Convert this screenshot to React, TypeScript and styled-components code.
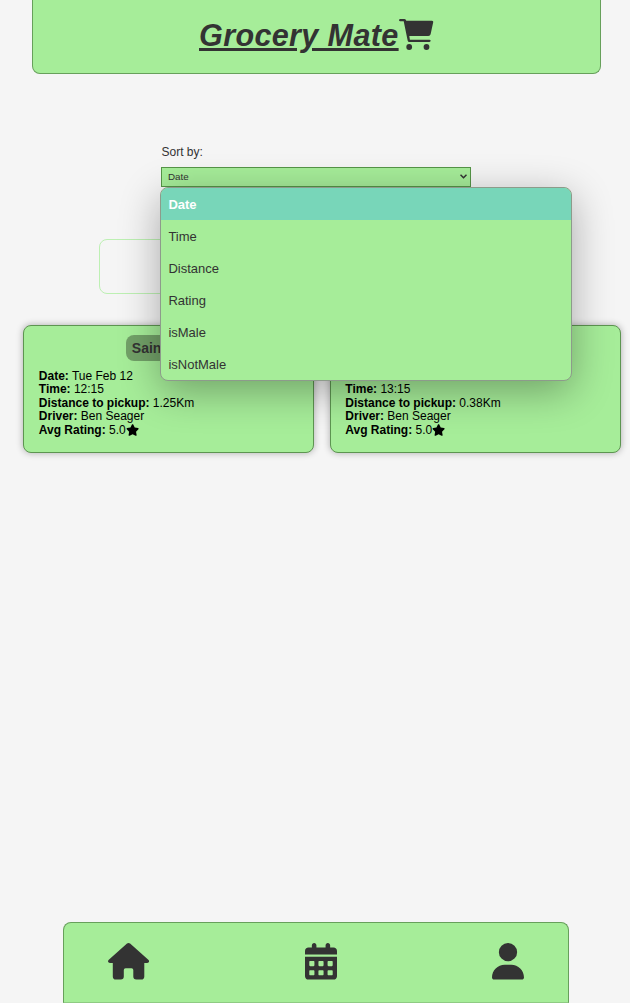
import React from "react";
import styled, { createGlobalStyle } from "styled-components";
import { FaUser, FaStar } from "react-icons/fa6";

const GlobalStyle = createGlobalStyle`
  * { box-sizing: border-box; }
  body {
    margin: 0;
    background: #f5f5f5;
    color: #333;
    font-family: "Liberation Sans", Arial, sans-serif;
    font-size: 12px;
  }
`;

const Page = styled.div`
  height: 1003px;
  display: flex;
  flex-direction: column;
  overflow: hidden;
`;

const Header = styled.header`
  height: 74px;
  width: 569px;
  margin-left: 32px;
  padding: 17px 0 0 166px;
  display: flex;
  align-items: flex-start;
  background: #a6ed99;
  border: 1px solid #67a05b;
  border-top: 0;
  border-radius: 0 0 8px 8px;
`;

const Title = styled.h1`
  margin: 0;
  font-size: 30.6px;
  line-height: 36px;
  letter-spacing: 0.34px;
  font-style: italic;
  text-decoration: underline;
  text-decoration-thickness: 3px;
  text-underline-offset: 2px;
  white-space: nowrap;
`;

const CartSvg = styled.svg`
  margin-top: 2px;
  flex: none;
`;

const SortArea = styled.section`
  position: relative;
  width: 310px;
  margin: 71px 0 0 161px;
`;

const SortLabel = styled.label`
  display: block;
  height: 22px;
  padding-left: 0.5px;
  line-height: 14px;
`;

const Select = styled.div`
  height: 20px;
  padding: 0 3px 1px 6px;
  display: flex;
  align-items: center;
  justify-content: space-between;
  background: #a6ed99;
  border: 1px solid #559547;
  font-size: 9.8px;
`;

const Menu = styled.ul`
  position: absolute;
  z-index: 2;
  top: 42px;
  left: -1px;
  width: 412px;
  height: 194px;
  margin: 0;
  padding: 0;
  list-style: none;
  overflow: hidden;
  background: #a6ed99;
  border: 1px solid #8d9b8b;
  border-radius: 8px;
  box-shadow: 0 10px 40px rgba(0, 0, 0, 0.32);
`;

const Option = styled.li<{ $active?: boolean }>`
  height: 32px;
  padding-left: 7.4px;
  line-height: 33px;
  font-size: 13px;
  color: ${(p) => (p.$active ? "#fff" : "#333")};
  background: ${(p) => (p.$active ? "#78d6b9" : "transparent")};
  font-weight: ${(p) => (p.$active ? 700 : 400)};
`;

const FilterBox = styled.div`
  width: 433px;
  height: 55px;
  margin: 52px 0 0 99px;
  border: 1px solid #bdf0b3;
  border-radius: 8px;
`;

const Cards = styled.main`
  display: flex;
  gap: 15.5px;
  margin: 31px 0 0 23px;
`;

const Card = styled.article`
  width: 291px;
  height: 128px;
  flex: none;
  padding: 9px 14.8px;
  background: #a6ed99;
  border: 1px solid #5d9551;
  border-radius: 8px;
  box-shadow: 0 0 7px rgba(0, 0, 0, 0.3);
  color: #000;
`;

const Store = styled.h2`
  width: 86px;
  height: 26px;
  margin: 0 auto 8.6px;
  padding-left: 6.3px;
  border-radius: 8px;
  background: #72a168;
  color: #333;
  font-size: 14px;
  line-height: 27px;
`;

const Detail = styled.p`
  margin: 0;
  height: 13.5px;
  line-height: 13.5px;
  white-space: nowrap;
  svg { width: 13.2px; height: 12px; vertical-align: -2px; }
`;

const BottomNav = styled.nav`
  width: 506px;
  height: 81px;
  margin: auto 0 0 63px;
  padding: 20px 43.7px 0 44.2px;
  display: flex;
  justify-content: space-between;
  background: #a6ed99;
  border: 1px solid #67a05b;
  border-radius: 8px 8px 0 0;
  border-bottom-color: #8fcb83;
`;

const UserIcon = styled(FaUser)`
  width: 32px;
  height: 36.6px;
`;

const CartIcon = () => (
  <CartSvg width="35" height="31" viewBox="0 0 35 31" fill="#333">
    <path d="M1.200 0H5.500Q6.900 0 7.300 1.700H33Q34.600 1.700 34.200 3.300L31.600 15.200Q31.200 17 29.300 17H10.300L10.900 20.700H30.500A1.150 1.150 0 0 1 30.500 23H10.300Q9 23 8.700 21.700L4.700 2.300H1.200A1.150 1.150 0 0 1 1.200 0Z" />
    <circle cx="10.200" cy="28" r="2.900" />
    <circle cx="27.500" cy="28" r="2.900" />
  </CartSvg>
);

const HomeIcon = () => (
  <svg width="41.100" height="36.600" viewBox="0 0 41.1 36.6" fill="#333">
    <path d="M19 .6Q20.550-.6 22.100 .6L40.300 16.700Q41.600 18 40.700 19.300Q40.200 20.100 39 20.100H36.300V33.500Q36.300 36.600 33.200 36.600H28.300Q25.300 36.600 25.300 33.600V27Q25.300 25.200 23.500 25.200H17.600Q15.800 25.200 15.800 27V33.600Q15.800 36.600 12.800 36.600H7.900Q4.800 36.600 4.800 33.500V20.100H2.100Q.9 20.100 .4 19.300Q-.5 18 .8 16.700Z" />
  </svg>
);

const CalendarIcon = () => (
  <svg width="32" height="36.6" viewBox="0 0 448 512" fill="#333">
    <path
      fillRule="evenodd"
      d="M128 0c17.700 0 32 14.300 32 32v32h128V32c0-17.700 14.300-32 32-32s32 14.300 32 32v32h48c26.500 0 48 21.500 48 48v48H0v-48C0 85.500 21.500 64 48 64h48V32C96 14.300 110.300 0 128 0zM0 192h448v272c0 26.500-21.500 48-48 48H48c-26.500 0-48-21.500-48-48V192zM72 252c-6 0-12 6-12 12v48c0 6 6 12 12 12h48c6 0 12-6 12-12v-48c0-6-6-12-12-12H72zM200 252c-6 0-12 6-12 12v48c0 6 6 12 12 12h48c6 0 12-6 12-12v-48c0-6-6-12-12-12h-48zM328 252c-6 0-12 6-12 12v48c0 6 6 12 12 12h48c6 0 12-6 12-12v-48c0-6-6-12-12-12h-48zM72 380c-6 0-12 6-12 12v48c0 6 6 12 12 12h48c6 0 12-6 12-12v-48c0-6-6-12-12-12H72zM200 380c-6 0-12 6-12 12v48c0 6 6 12 12 12h48c6 0 12-6 12-12v-48c0-6-6-12-12-12h-48zM328 380c-6 0-12 6-12 12v48c0 6 6 12 12 12h48c6 0 12-6 12-12v-48c0-6-6-12-12-12h-48z"
    />
  </svg>
);

const Chevron = () => (
  <svg width="7" height="5" viewBox="0 0 7 5" fill="none" stroke="#333" strokeWidth="1.5">
    <path d="M.5 .7 3.5 3.7 6.5 .7" />
  </svg>
);

const options = ["Date", "Time", "Distance", "Rating", "isMale", "isNotMale"];
const trips = [
  { date: "Tue Feb 12", time: "12:15", distance: "1.25Km" },
  { date: "Tue Feb 12", time: "13:15", distance: "0.38Km" },
];

export default function App() {
  return (
    <Page>
      <GlobalStyle />
      <Header>
        <Title>Grocery Mate</Title>
        <CartIcon />
      </Header>
      <SortArea>
        <SortLabel>Sort by:</SortLabel>
        <Select>
          Date
          <Chevron />
        </Select>
        <Menu>
          {options.map((o, i) => (
            <Option key={o} $active={i === 0}>{o}</Option>
          ))}
        </Menu>
      </SortArea>
      <FilterBox />
      <Cards>
        {trips.map((t) => (
          <Card key={t.time}>
            <Store>Sainsburys</Store>
            <Detail><b>Date:</b> {t.date}</Detail>
            <Detail><b>Time:</b> {t.time}</Detail>
            <Detail><b>Distance to pickup:</b> {t.distance}</Detail>
            <Detail><b>Driver:</b> Ben Seager</Detail>
            <Detail><b>Avg Rating:</b> 5.0<FaStar /></Detail>
          </Card>
        ))}
      </Cards>
      <BottomNav>
        <HomeIcon />
        <CalendarIcon />
        <UserIcon />
      </BottomNav>
    </Page>
  );
}
